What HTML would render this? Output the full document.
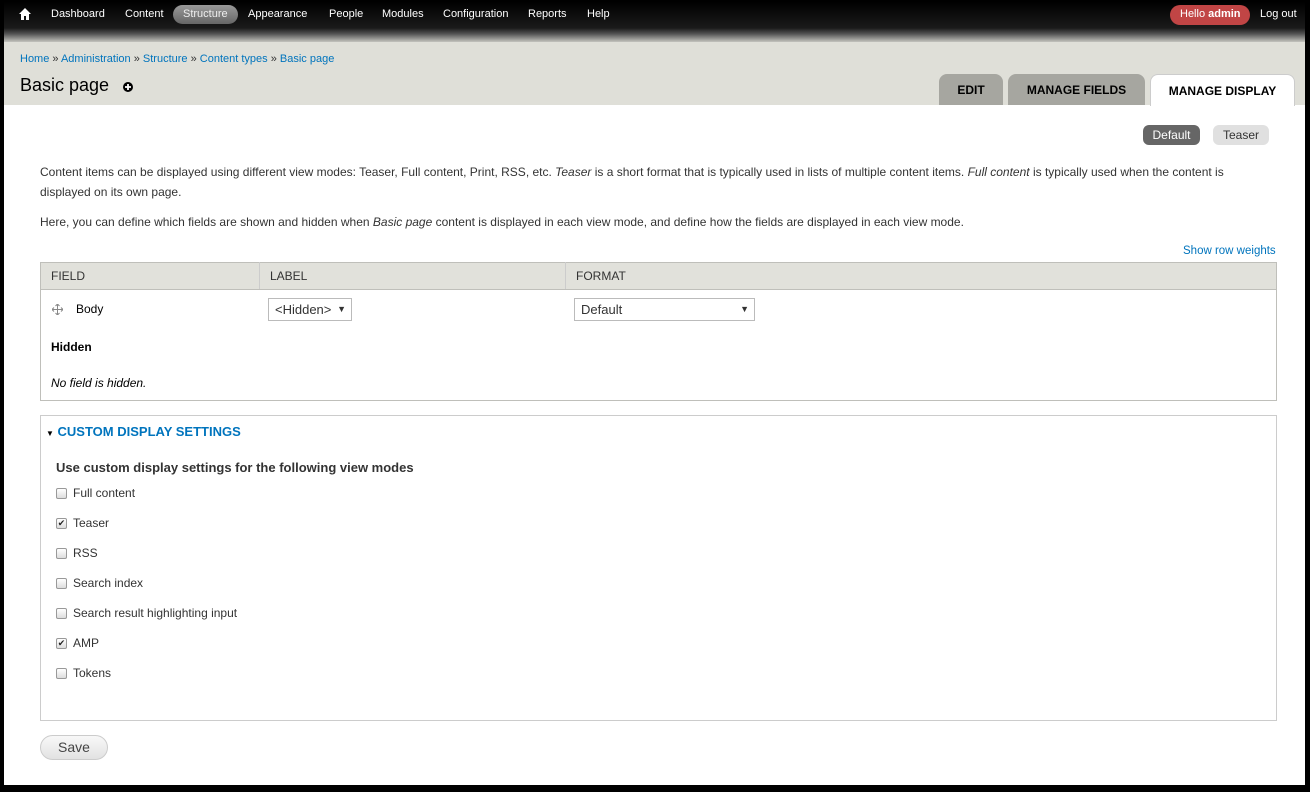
<!DOCTYPE html>
<html><head><meta charset="utf-8"><style>
*{box-sizing:border-box;margin:0;padding:0}
body{width:1310px;height:792px;background:#000;font-family:"Liberation Sans",Arial,sans-serif;font-size:12px;color:#333;position:relative;overflow:hidden}
.frame{position:absolute;left:4px;top:2px;width:1301px;height:783px;background:#fff;overflow:hidden}
.tb{position:absolute;left:0;top:0;width:100%;height:40px;background:linear-gradient(#000 0,#1a1a1a 26px,#555 32px,#dfdfd8 42px)}
.tb a{position:absolute;top:6px;color:#fff;font-size:11px;text-decoration:none;line-height:13px}
.hdr{position:absolute;left:0;top:40px;width:100%;height:63px;background:#dfdfd8}
.bc{position:absolute;left:16px;top:51px;font-size:11px;color:#333}
.bc a{color:#0074bd;text-decoration:none}
h1{position:absolute;left:16px;top:73px;font-weight:normal;font-size:18px;color:#000}
.tab{position:absolute;top:72px;height:31px;border-radius:8px 8px 0 0;background:#a6a6a0;font-weight:bold;font-size:12px;color:#000;text-align:center;line-height:33px}
a{color:#0074bd;text-decoration:none}
p{position:absolute;left:36px;font-size:12px;line-height:20px;color:#333;width:1200px}
.pill{position:absolute;top:123px;height:20px;border-radius:6px;font-size:12px;line-height:20px;text-align:center}
table{position:absolute;left:36px;top:260px;width:1237px;border:1px solid #bfbfba;border-collapse:collapse}
th{background:#e1e1db;height:27px;text-align:left;font-weight:normal;font-size:12px;color:#333;padding-left:10px;border-right:1px solid #ccc;border-bottom:1px solid #bfbfba}
.sel{position:absolute;height:23px;border:1px solid #bbb;background:#fff;font-size:13px;line-height:21px;padding-left:6px;color:#333}
.sel span{position:absolute;right:5px;top:0;font-size:9px}
.fs{position:absolute;left:36px;top:413px;width:1237px;height:306px;border:1px solid #ccc}
.cb{position:absolute;left:52px;font-size:12px;color:#333;display:flex;align-items:center;height:14px}
.cb i{display:block;width:11px;height:11px;border:1px solid #999;border-radius:2px;background:linear-gradient(#fff,#ddd);margin-right:6px;font-style:normal;font-size:9px;line-height:9px;text-align:center;color:#222}
</style></head><body>
<div class="frame">
<div class="tb">
<svg style="position:absolute;left:15px;top:6px" width="12" height="12" viewBox="0 0 12 12"><path d="M6 0L0 6h2v6h3V8h2v4h3V6h2z" fill="#fff"/></svg>
<a style="left:47px">Dashboard</a><a style="left:121px">Content</a>
<span style="position:absolute;left:169px;top:3px;width:65px;height:19px;border-radius:10px;background:linear-gradient(#999,#666);"></span>
<a style="left:179px;color:#eee">Structure</a><a style="left:244px">Appearance</a><a style="left:325px">People</a><a style="left:378px">Modules</a><a style="left:439px">Configuration</a><a style="left:524px">Reports</a><a style="left:583px">Help</a>
<span style="position:absolute;left:1166px;top:3px;width:80px;height:20px;border-radius:10px;background:#c14545"></span>
<a style="left:1176px">Hello <b>admin</b></a><a style="left:1256px">Log out</a>
</div>
<div class="hdr"></div>
<div class="bc"><a>Home</a> » <a>Administration</a> » <a>Structure</a> » <a>Content types</a> » <a>Basic page</a></div>
<h1>Basic page</h1>
<svg style="position:absolute;left:119px;top:80px" width="10" height="10" viewBox="0 0 10 10"><circle cx="5" cy="5" r="5" fill="#000"/><path d="M5 2v6M2 5h6" stroke="#fff" stroke-width="1.8"/></svg>
<div class="tab" style="left:935px;width:64px">EDIT</div>
<div class="tab" style="left:1004px;width:137px">MANAGE FIELDS</div>
<div class="tab" style="left:1146px;width:145px;background:#fff;border:1px solid #ccc;border-bottom:none;height:32px">MANAGE DISPLAY</div>
<div class="pill" style="left:1139px;width:57px;background:#666;color:#fff">Default</div>
<div class="pill" style="left:1209px;width:56px;background:#e0e0e0;color:#333">Teaser</div>
<p style="top:160px">Content items can be displayed using different view modes: Teaser, Full content, Print, RSS, etc. <i>Teaser</i> is a short format that is typically used in lists of multiple content items. <i>Full content</i> is typically used when the content is displayed on its own page.</p>
<p style="top:210px">Here, you can define which fields are shown and hidden when <i>Basic page</i> content is displayed in each view mode, and define how the fields are displayed in each view mode.</p>
<a style="position:absolute;left:1179px;top:243px;font-size:11.5px">Show row weights</a>
<table><tr><th style="width:219px">FIELD</th><th style="width:306px">LABEL</th><th style="border-right:none">FORMAT</th></tr>
<tr><td colspan="3" style="height:111px"></td></tr></table>
<svg style="position:absolute;left:48px;top:302px" width="11" height="11" viewBox="0 0 11 11"><path d="M5.5 0v11M0 5.5h11M3.5 2L5.5 0 7.5 2M3.5 9l2 2 2-2M2 3.5L0 5.5 2 7.5M9 3.5l2 2-2 2" stroke="#888" fill="none"/></svg>
<div style="position:absolute;left:72px;top:300px;color:#000">Body</div>
<div class="sel" style="left:264px;top:296px;width:84px">&lt;Hidden&gt;<span>▼</span></div>
<div class="sel" style="left:570px;top:296px;width:181px">Default<span>▼</span></div>
<div style="position:absolute;left:47px;top:338px;font-weight:bold;color:#000">Hidden</div>
<div style="position:absolute;left:47px;top:374px;font-style:italic;color:#000">No field is hidden.</div>
<div class="fs"></div>
<div style="position:absolute;left:42px;top:422px;font-size:13px;font-weight:bold;color:#0074bd"><span style="font-size:8px;color:#000">▼</span> CUSTOM DISPLAY SETTINGS</div>
<div style="position:absolute;left:52px;top:458px;font-size:13px;font-weight:bold">Use custom display settings for the following view modes</div>
<div class="cb" style="top:484px"><i></i>Full content</div>
<div class="cb" style="top:514px"><i>✔</i>Teaser</div>
<div class="cb" style="top:544px"><i></i>RSS</div>
<div class="cb" style="top:574px"><i></i>Search index</div>
<div class="cb" style="top:604px"><i></i>Search result highlighting input</div>
<div class="cb" style="top:634px"><i>✔</i>AMP</div>
<div class="cb" style="top:664px"><i></i>Tokens</div>
<div style="position:absolute;left:36px;top:733px;width:68px;height:25px;border:1px solid #ccc;border-radius:13px;background:linear-gradient(#f8f8f8,#e2e2e2);text-align:center;line-height:23px;font-size:14px;color:#444">Save</div>
</div>
</body></html>
